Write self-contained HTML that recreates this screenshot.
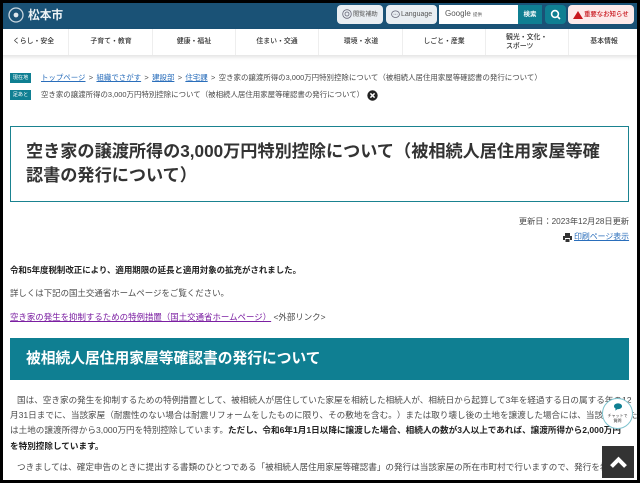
<!DOCTYPE html>
<html lang="ja"><head><meta charset="utf-8">
<style>
html,body{margin:0;padding:0;background:#000;}
body{width:640px;height:483px;overflow:hidden;position:relative;font-family:"Liberation Sans","Noto Sans CJK JP",sans-serif;text-spacing-trim:space-all;}
#p{position:absolute;left:3px;top:3px;width:634px;height:477px;background:#fff;overflow:hidden;}
#in{position:absolute;left:-3px;top:-3px;width:640px;height:483px;filter:blur(.25px);}
.a{position:absolute;white-space:nowrap;}
.t{color:#4a4a4a;font-size:8.6px;line-height:14px;}
.b{font-weight:700;color:#222;}
a{color:#2a6ebb;text-decoration:underline;}
.nav{position:absolute;top:29px;height:26px;width:83px;text-align:center;font-size:6.9px;font-weight:500;color:#333;line-height:26px;border-right:1px solid #eee;box-sizing:border-box;}
.btn{position:absolute;top:5px;height:19px;background:#e9eef2;border-radius:4px;font-size:6.2px;color:#555;line-height:19px;}
.lab{position:absolute;left:10px;width:21px;height:10px;background:#0f7f92;color:#fff;font-size:5.2px;line-height:10px;text-align:center;}
</style></head><body>
<div id="p"><div id="in">
<div class="a" style="left:0;top:0;width:640px;height:29px;background:#1a5276"></div>
<svg class="a" style="left:8px;top:7px" width="16" height="16" viewBox="0 0 16 16"><circle cx="8" cy="8" r="7" fill="none" stroke="#c9d6df" stroke-width="1.3"/><circle cx="8" cy="8" r="2.4" fill="#dfe7ec"/></svg>
<div class="a" style="left:28px;top:6.5px;font-size:11.7px;line-height:18px;font-weight:700;color:#eef3f6">松本市</div>

<div class="btn" style="left:337px;width:46px;"><svg class="a" style="left:5px;top:4px" width="10" height="10" viewBox="0 0 10 10"><circle cx="5" cy="5" r="4.3" fill="none" stroke="#667" stroke-width=".8"/><circle cx="5" cy="5" r="2" fill="none" stroke="#667" stroke-width=".8"/></svg><span class="a" style="left:16px">閲覧補助</span></div>
<div class="btn" style="left:386px;width:51px;"><svg class="a" style="left:5px;top:5px" width="9" height="9" viewBox="0 0 9 9"><ellipse cx="4.5" cy="4.2" rx="3.9" ry="3.3" fill="none" stroke="#667" stroke-width=".8"/><path d="M2.6 4.2h3.8" stroke="#667" stroke-width=".7" stroke-dasharray=".8 .8"/></svg><span class="a" style="left:15px;font-size:7px">Language</span></div>
<div class="a" style="left:439px;top:5px;width:79px;height:19px;background:#fff"></div>
<div class="a" style="left:445px;top:5px;font-size:8px;line-height:18px;color:#555">Google <span style="font-size:4.5px">提供</span></div>
<div class="a" style="left:518px;top:5px;width:24px;height:19px;background:#0f7f92;color:#fff;font-size:6.5px;font-weight:700;line-height:19px;text-align:center">検索</div>
<div class="a" style="left:545px;top:5px;width:21px;height:19px;background:#0f7f92;border-radius:4px"></div>
<svg class="a" style="left:550px;top:9px" width="11" height="11" viewBox="0 0 11 11"><circle cx="5" cy="5" r="3.4" fill="none" stroke="#fff" stroke-width="1.6"/><path d="M7.5 7.5L10 10" stroke="#fff" stroke-width="1.6"/></svg>
<div class="a" style="left:568px;top:5px;width:66px;height:19px;background:#fdeaea;border-radius:4px"></div>
<svg class="a" style="left:573px;top:11px" width="10" height="8" viewBox="0 0 10 8"><path d="M5 0L10 8H0Z" fill="#c8161d"/></svg>
<div class="a" style="left:584px;top:5px;font-size:6.4px;font-weight:500;line-height:19px;color:#c8161d">重要なお知らせ</div>

<div class="a" style="left:0;top:29px;width:640px;height:26px;background:#fff;box-shadow:0 2px 4px rgba(0,0,0,.12)"></div>
<div class="nav" style="left:-14px;padding-left:13px;">くらし・安全</div>
<div class="nav" style="left:70px;">子育て・教育</div>
<div class="nav" style="left:153px;">健康・福祉</div>
<div class="nav" style="left:236px;">住まい・交通</div>
<div class="nav" style="left:320px;">環境・水道</div>
<div class="nav" style="left:403px;">しごと・産業</div>
<div class="nav" style="left:486px;line-height:9px;padding-top:4px;text-align:left;padding-left:20px;">観光・文化・<br>スポーツ</div>
<div class="nav" style="left:569px;border:0;width:70px;">基本情報</div>

<div class="lab" style="top:73px">現在地</div>
<div class="lab" style="top:90px">足あと</div>
<div class="a t" style="left:41px;top:71px;font-size:7.45px;word-spacing:1.25px"><a href="#">トップページ</a> &gt; <a href="#">組織でさがす</a> &gt; <a href="#">建設部</a> &gt; <a href="#">住宅課</a> &gt; 空き家の譲渡所得の3,000万円特別控除について（被相続人居住用家屋等確認書の発行について）</div>
<div class="a t" style="left:41px;top:88px;font-size:7.45px">空き家の譲渡所得の3,000万円特別控除について（被相続人居住用家屋等確認書の発行について）</div>
<svg class="a" style="left:367px;top:90px" width="11" height="11" viewBox="0 0 11 11"><circle cx="5.5" cy="5.5" r="5.2" fill="#222"/><path d="M3.4 3.4L7.6 7.6M7.6 3.4L3.4 7.6" stroke="#fff" stroke-width="1.5"/></svg>

<div class="a" style="left:10px;top:126px;width:619px;height:76px;box-sizing:border-box;border:1.5px solid #1a8290"></div>
<div class="a" style="left:26px;top:139px;font-size:17.15px;line-height:24px;font-weight:700;color:#333">空き家の譲渡所得の3,000万円特別控除について（被相続人居住用家屋等確<br>認書の発行について）</div>

<div class="a t" style="right:11px;top:215px;font-size:8.2px">更新日：2023年12月28日更新</div>
<svg class="a" style="left:563px;top:233px" width="9" height="9" viewBox="0 0 9 9"><path d="M2 0h5v3H2zM0 3h9v4H7V5H2v2H0zM2.5 6h4v3h-4z" fill="#333"/></svg>
<div class="a t" style="left:574px;top:230px;font-size:7.9px"><a href="#">印刷ページ表示</a></div>

<div class="a t b" style="left:10px;top:263px;font-size:8.45px">令和5年度税制改正により、適用期限の延長と適用対象の拡充がされました。</div>
<div class="a t" style="left:10px;top:286px;font-size:8.45px">詳しくは下記の国土交通省ホームページをご覧ください。</div>
<div class="a t" style="left:10px;top:310px;font-size:8.45px"><a href="#" style="color:#7b1fa2">空き家の発生を抑制するための特例措置（国土交通省ホームページ）</a> &lt;外部リンク&gt;</div>

<div class="a" style="left:10px;top:338px;width:619px;height:42px;background:#0f7f92"></div>
<div class="a" style="left:26px;top:349px;font-size:14.75px;line-height:20px;font-weight:700;color:#fff">被相続人居住用家屋等確認書の発行について</div>

<div class="a t" style="left:17px;top:393px">国は、空き家の発生を抑制するための特例措置として、被相続人が居住していた家屋を相続した相続人が、相続日から起算して3年を経過する日の属する年の12</div>
<div class="a t" style="left:10px;top:408px">月31日までに、当該家屋（耐震性のない場合は耐震リフォームをしたものに限り、その敷地を含む。）または取り壊し後の土地を譲渡した場合には、当該家屋また</div>
<div class="a t" style="left:10px;top:423px">は土地の譲渡所得から3,000万円を特別控除しています。<span class="b">ただし、令和6年1月1日以降に譲渡した場合、相続人の数が3人以上であれば、譲渡所得から2,000万円</span></div>
<div class="a t b" style="left:10px;top:439px">を特別控除しています。</div>
<div class="a t" style="left:17px;top:460px">つきましては、確定申告のときに提出する書類のひとつである「被相続人居住用家屋等確認書」の発行は当該家屋の所在市町村で行いますので、発行を希望</div>

<div class="a" style="left:602px;top:398px;width:31px;height:31px;box-sizing:border-box;background:#fff;border:1px solid #7fc4cf;border-radius:50%"></div>
<svg class="a" style="left:614px;top:403px" width="8" height="8" viewBox="0 0 10 9"><path d="M5 0C2 0 0 1.6 0 3.6c0 1.3.8 2.3 2 3L1.6 9 4.4 7.2H5c3 0 5-1.6 5-3.6S8 0 5 0z" fill="#0f7f92"/></svg>
<div class="a" style="left:602px;top:412.5px;width:31px;text-align:center;font-size:4px;line-height:5.5px;color:#333">チャットで<br>質問</div>
<div class="a" style="left:602px;top:446px;width:32px;height:32px;background:#333"></div>
<svg class="a" style="left:609px;top:456px" width="19" height="13" viewBox="0 0 19 13"><path d="M2.5 10.5L9.5 3.5L16.5 10.5" fill="none" stroke="#fff" stroke-width="4"/></svg>
</div></div>
</body></html>
